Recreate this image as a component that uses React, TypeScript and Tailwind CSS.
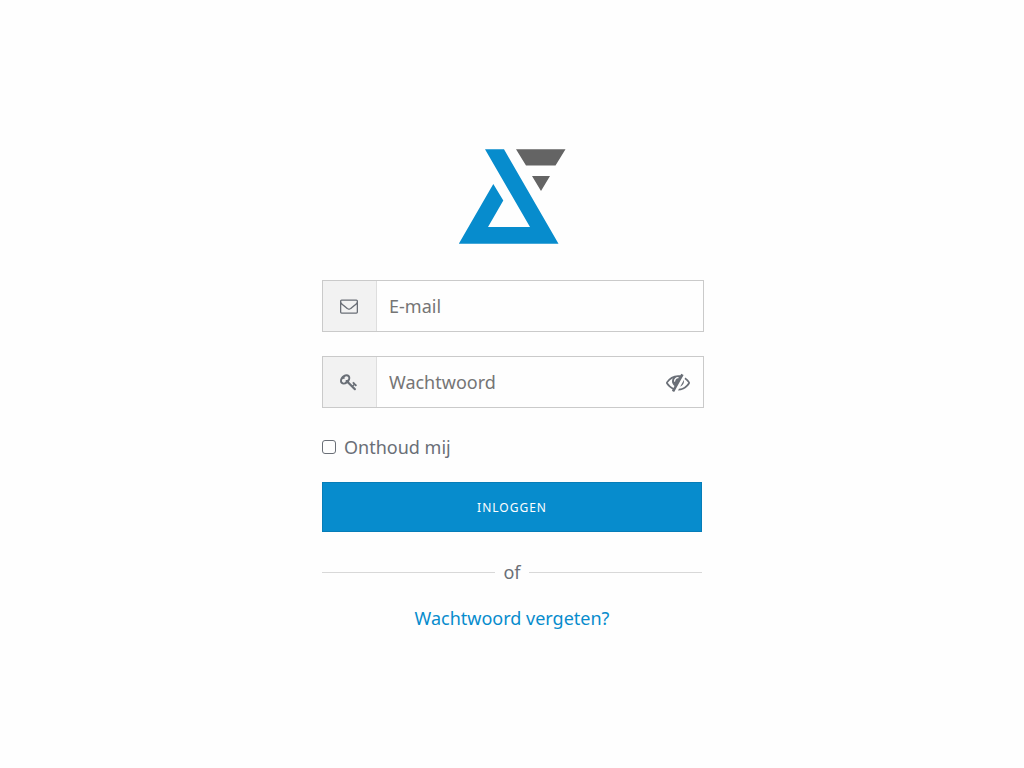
import { useState } from 'react';
import type { ReactNode } from 'react';

type IconProps = { className: string; d: string };

const ENVELOPE =
  'M1664 1504v-768q-32 36-69 66-268 206-426 338-51 43-83 67t-86.5 48.5-102.5 24.5h-2q-48 0-102.5-24.5t-86.5-48.5-83-67q-158-132-426-338-37-30-69-66v768q0 13 9.5 22.5t22.5 9.5h1472q13 0 22.5-9.5t9.5-22.5zm0-1051v-24.5l-.5-13-3-12.5-5.5-9-9-7.5-14-2.5h-1472q-13 0-22.5 9.5t-9.5 22.5q0 168 147 284 193 152 401 317 6 5 35 29.5t46 37.5 44.5 31.5 50.5 27.5 43 9h2q20 0 43-9t50.5-27.5 44.5-31.5 46-37.5 35-29.5q208-165 401-317 54-43 100.5-115.5t46.5-131.5zm128-37v1088q0 66-47 113t-113 47h-1472q-66 0-113-47t-47-113v-1088q0-66 47-113t113-47h1472q66 0 113 47t47 113z';
const KEY =
  'M832 512q0-80-56-136t-136-56-136 56-56 136q0 42 19 83-41-19-83-19-80 0-136 56t-56 136 56 136 136 56 136-56 56-136q0-42-19-83 41 19 83 19 80 0 136-56t56-136zm851 704q0 17-49 66t-66 49q-9 0-28.5-16t-36.5-33-38.5-40-24.5-26l-96 96 220 220q28 28 28 68 0 42-39 81t-81 39q-40 0-68-28l-671-671q-176 131-365 131-163 0-265.5-102.5t-102.5-265.5q0-160 95-313t248-248 313-95q163 0 265.5 102.5t102.5 265.5q0 189-131 365l355 355 96-96q-3-3-26-24.5t-40-38.5-33-36.5-16-28.5q0-17 49-66t66-49q13 0 23 10 6 6 46 44.5t82 79.5 86.5 86 73 78 28.5 41z';
const EYE_SLASH =
  'M555 1335l78-141q-87-63-136-159t-49-203q0-121 61-225-229 117-381 353 167 258 427 375zm389-759q0-20-14-34t-34-14q-125 0-214.5 89.5t-89.5 214.5q0 20 14 34t34 14 34-14 14-34q0-86 61-147t147-61q20 0 34-14t14-34zm363-191q0 7-1 9-106 189-316 567t-315 566l-49 89q-10 16-28 16-12 0-134-70-16-10-16-28 0-12 44-87-143-65-263.5-173t-208.5-245q-20-31-20-69t20-69q153-235 380-371t496-136q89 0 180 17l54-97q10-16 28-16 5 0 18 6t31 15.5 33 18.5 31.5 18.5 19.5 11.5q16 10 16 27zm37 447q0 139-79 253.5t-209 164.5l280-502q8 45 8 84zm448 128q0 35-20 69-39 64-109 145-150 172-347.5 267t-419.5 95l74-132q212-18 392.5-137t301.5-307q-115-179-282-294l63-112q95 64 182.5 153t144.5 184q20 34 20 69z';

function Icon({ className, d }: IconProps) {
  return (
    <svg viewBox="0 0 1792 1792" fill="currentColor" aria-hidden="true" className={className}>
      <path d={d} />
    </svg>
  );
}

function Logo() {
  return (
    <svg viewBox="0 0 108 96" aria-hidden="true" className="h-24 w-[108px]">
      <path fill="#078ccd" d="M27 1.300h19l54.5 94.500H.8L35.300 36l10 16.500L30 79h42z" />
      <path fill="#646464" d="M58 1.300h49.500l-10 16.200H68zM74 28h18l-9 15z" />
    </svg>
  );
}

type FieldProps = {
  id: string;
  type: string;
  label: string;
  icon: string;
  children?: ReactNode;
};

function Field({ id, type, label, icon, children }: FieldProps) {
  return (
    <div className="-mr-0.5 flex h-[52px] border border-[#cacaca] bg-[#fefefe]">
      <label
        htmlFor={id}
        aria-label={label}
        className="flex w-[54px] shrink-0 items-center justify-center border-r border-[#dedede] bg-[#f2f2f2] pr-px"
      >
        <Icon d={icon} className="size-[18px]" />
      </label>
      <input
        id={id}
        type={type}
        placeholder={label}
        className="min-w-0 flex-1 bg-transparent px-3 text-lg text-[#6c6f75] outline-none placeholder:text-[#757575] placeholder:opacity-100"
      />
      {children}
    </div>
  );
}

export default function App() {
  const [visible, setVisible] = useState(false);

  return (
    <main className="flex min-h-screen justify-center bg-[#fefefe] px-4 pt-37 pb-8 font-['Noto_Sans',sans-serif] text-lg text-[#6a6f77]">
      <form className="flex w-full max-w-[380px] flex-col" onSubmit={(e) => e.preventDefault()}>
        <div className="mb-9 flex justify-center">
          <Logo />
        </div>
        <div className="flex flex-col gap-6">
          <Field id="email" type="email" label="E-mail" icon={ENVELOPE} />
          <Field id="password" type={visible ? 'text' : 'password'} label="Wachtwoord" icon={KEY}>
            <button
              type="button"
              aria-label="Wachtwoord tonen"
              onClick={() => setVisible(!visible)}
              className="flex items-center pr-[13px]"
            >
              <Icon d={EYE_SLASH} className="size-6" />
            </button>
          </Field>
        </div>
        <label className="mt-6 mb-5 flex items-center gap-2 leading-[30px]">
          <input
            type="checkbox"
            className="size-3.5 appearance-none rounded-[3px] border border-[#6a6f77] checked:bg-[#078ccd]"
          />
          Onthoud mij
        </label>
        <button
          type="submit"
          className="h-[50px] border border-[#067db8] bg-[#078ccd] pt-px text-xs tracking-[1px] text-[#fefefe] uppercase"
        >
          Inloggen
        </button>
        <div className="mt-6 flex items-center gap-2 leading-8">
          <span className="h-px flex-1 bg-[#d8d8d8]" />
          of
          <span className="h-px flex-1 bg-[#d8d8d8]" />
        </div>
        <a href="#" className="mt-3.5 self-center leading-8 text-[#078ccd]">
          Wachtwoord vergeten?
        </a>
      </form>
    </main>
  );
}
